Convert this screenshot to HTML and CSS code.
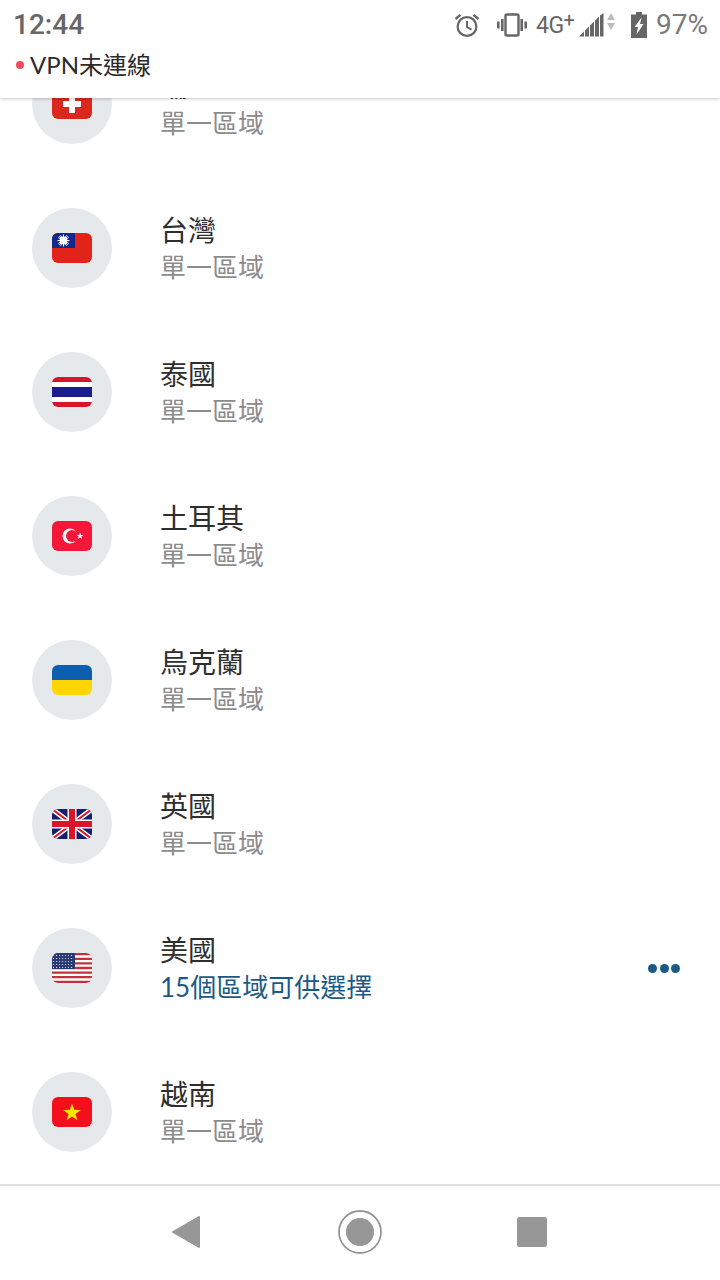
FILE: index.html
```html
<!DOCTYPE html>
<html lang="zh-Hant">
<head>
<meta charset="utf-8">
<title>VPN</title>
<link rel="stylesheet" href="styles.css">
</head>
<body>
<div class="app">
  <header class="top">
    <div class="status">
      <span class="time">12:44</span>
      <div class="sys">
        <svg class="i-alarm" width="26" height="24" viewBox="0 0 26 24"><circle cx="13" cy="13.5" r="9.4" fill="none" stroke="#666" stroke-width="2.2"/><path d="M13 8v6l4.5 2.6" fill="none" stroke="#666" stroke-width="2"/><path d="M1.5 6 6.5 1.8M24.500 6 19.500 1.800" stroke="#666" stroke-width="2.400" fill="none"/></svg>
        <svg class="i-vib" width="32" height="24" viewBox="0 0 32 24"><rect x="9.500" y="1.500" width="13" height="21" rx="1.500" fill="none" stroke="#666" stroke-width="2.400"/><path d="M1 8.500h2.600v7H1zM5 6h2.600v12H5zM24.400 6H27v12h-2.600zM28.400 8.500H31v7h-2.600z" fill="#666"/></svg>
        <span class="net">4G<sup class="plus">+</sup></span>
        <svg class="i-sig" width="25" height="24" viewBox="0 0 25 24"><path d="M0 23.500 5 18.500V23.500ZM6 17.500 10 13.500V23.500H6ZM11 12.500 15 8.500V23.500H11ZM16 7.500 20 3.500V23.500H16ZM21 2.500 24.500 0V23.500H21Z" fill="#666"/></svg>
        <svg class="i-arr" width="8" height="17" viewBox="0 0 8 17"><path d="M4 0 8 7H0Z" fill="#bbb"/><path d="M4 17 0 10H8Z" fill="#bbb"/></svg>
        <svg class="i-bat" width="16" height="26" viewBox="0 0 16 26"><path d="M5 0h6v2.500h5V26H0V2.500h5Z" fill="#666"/><path d="M10.500 5.500 3.500 15h3.500l-1.500 7.500 7-10.500H9Z" fill="#fff"/></svg>
        <span class="pct">97%</span>
      </div>
    </div>
    <div class="vpn"><span class="vpn-dot"></span><span>VPN未連線</span></div>
  </header>

  <main class="list">
    <div class="rows">
      <div class="row">
        <div class="disc"><svg class="flag" viewBox="0 0 40 30"><rect width="40" height="30" fill="#da291c"/><path d="M17 6h6v6h6v6h-6v6h-6v-6h-6v-6h6Z" fill="#fff"/></svg></div>
        <div class="txt"><div class="name">瑞士</div><div class="sub">單一區域</div></div>
      </div>
      <div class="row">
        <div class="disc"><svg class="flag" viewBox="0 0 40 30"><rect width="40" height="30" fill="#e2231a"/><rect width="23" height="15" fill="#13288a"/><g stroke="#fff" stroke-width="1"><path d="M11.500 1.500v12M5.500 7.500h12M7.300 3.300l8.400 8.400M15.700 3.300l-8.400 8.400M8.500 2.300l6 10.400M14.500 2.300l-6 10.400M6.300 4.500l10.400 6M16.700 4.500l-10.400 6"/></g><circle cx="11.500" cy="7.500" r="3.900" fill="#fff"/></svg></div>
        <div class="txt"><div class="name">台灣</div><div class="sub">單一區域</div></div>
      </div>
      <div class="row">
        <div class="disc"><svg class="flag" viewBox="0 0 40 30"><rect width="40" height="30" fill="#fff"/><rect width="40" height="5" fill="#d8152b"/><rect y="25" width="40" height="5" fill="#d8152b"/><rect y="10" width="40" height="10" fill="#1c1c8c"/></svg></div>
        <div class="txt"><div class="name">泰國</div><div class="sub">單一區域</div></div>
      </div>
      <div class="row">
        <div class="disc"><svg class="flag" viewBox="0 0 40 30"><rect width="40" height="30" fill="#f5173a"/><circle cx="18" cy="15" r="7.500" fill="#fff"/><circle cx="20" cy="15" r="6" fill="#f5173a"/><path d="M28 11.600l.9 2.400 2.500.1-2 1.500.7 2.400-2.100-1.400-2.100 1.400.7-2.400-2-1.500 2.500-.1Z" fill="#fff"/></svg></div>
        <div class="txt"><div class="name">土耳其</div><div class="sub">單一區域</div></div>
      </div>
      <div class="row">
        <div class="disc"><svg class="flag" viewBox="0 0 40 30"><rect width="40" height="15" fill="#0d5eaf"/><rect y="15" width="40" height="15" fill="#ffd500"/></svg></div>
        <div class="txt"><div class="name">烏克蘭</div><div class="sub">單一區域</div></div>
      </div>
      <div class="row">
        <div class="disc"><svg class="flag" viewBox="0 0 40 30"><rect width="40" height="30" fill="#14206e"/><path d="M0 0 40 30M40 0 0 30" stroke="#fff" stroke-width="5"/><path d="M0 0 40 30M40 0 0 30" stroke="#d8152b" stroke-width="2"/><path d="M20 0V30M0 15H40" stroke="#fff" stroke-width="9"/><path d="M20 0V30M0 15H40" stroke="#d8152b" stroke-width="6"/></svg></div>
        <div class="txt"><div class="name">英國</div><div class="sub">單一區域</div></div>
      </div>
      <div class="row">
        <div class="disc"><svg class="flag" viewBox="0 0 40 30"><rect width="40" height="30" fill="#fff"/><path d="M0 1.200H40M0 5.800H40M0 10.400H40M0 15H40M0 19.600H40M0 24.200H40M0 28.800H40" stroke="#c4323f" stroke-width="2.300"/><rect width="23" height="16" fill="#2a3a74"/><path d="M1 2.500H22M1 5.500H22M1 8.500H22M1 11.500H22M1 14.500H22" stroke="#c5cbe0" stroke-width="1.100" stroke-dasharray="1.100 1.900"/></svg></div>
        <div class="txt"><div class="name">美國</div><div class="sub sub-multi">15個區域可供選擇</div></div>
        <div class="more"><span></span><span></span><span></span></div>
      </div>
      <div class="row">
        <div class="disc"><svg class="flag" viewBox="0 0 40 30"><rect width="40" height="30" fill="#f40f1c"/><path d="M20 6.500l2.200 6.300 6.600.1-5.300 4 1.900 6.400-5.400-3.800-5.400 3.800 1.900-6.400-5.300-4 6.600-.1Z" fill="#ffe600"/></svg></div>
        <div class="txt"><div class="name">越南</div><div class="sub">單一區域</div></div>
      </div>
    </div>
  </main>

  <nav class="nav">
    <svg class="nav-back" width="28" height="32" viewBox="0 0 28 32"><path d="M27 1V31L1 16Z" fill="#979797" stroke="#979797" stroke-width="2" stroke-linejoin="round"/></svg>
    <svg class="nav-home" width="44" height="44" viewBox="0 0 44 44"><circle cx="22" cy="22" r="21" fill="none" stroke="#979797" stroke-width="1.800"/><circle cx="22" cy="22" r="14" fill="#979797"/></svg>
    <svg width="30" height="30" viewBox="0 0 30 30"><rect width="30" height="30" rx="2.500" fill="#979797"/></svg>
  </nav>
</div>
</body>
</html>
```

FILE: styles.css
```css
* { box-sizing: border-box; }
html, body { margin: 0; padding: 0; }
body {
  background: #fff;
  font-family: "Open Sans", "Noto Sans CJK TC", sans-serif;
}
.app {
  width: 720px;
  height: 1280px;
  display: flex;
  flex-direction: column;
  overflow: hidden;
}
.top {
  position: relative;
  z-index: 2;
  flex: none;
  height: 98px;
  background: #fff;
  box-shadow: 0 1px 3px rgba(0, 0, 0, .22);
}
.status {
  height: 48px;
  display: flex;
  align-items: center;
  justify-content: space-between;
  padding: 2px 12px 0 13px;
}
.time {
  font: 500 28px/1 Roboto, sans-serif;
  color: #666;
}
.sys {
  display: flex;
  align-items: center;
  color: #757575;
}
.i-alarm { margin-right: 16px; }
.i-vib { margin-right: 8px; }
.net {
  font: 400 23px/1 Roboto, sans-serif;
  color: #666;
  width: 43px;
  letter-spacing: -.5px;
}
.plus { font-size: 20px; line-height: 0; vertical-align: 6px; }
.i-sig { margin-right: 3px; }
.i-arr { margin-right: 16px; margin-top: -7px; }
.i-bat { margin-right: 9px; margin-top: -1px; }
.pct {
  font: 400 28px/1 Roboto, sans-serif;
  color: #7a7a7a;
}
.vpn {
  display: flex;
  align-items: center;
  height: 34px;
  padding-left: 16px;
  font: 400 24px/1 Lato, "Noto Sans CJK TC", sans-serif;
  color: #2b2b2b;
}
.vpn-dot {
  width: 8px;
  height: 8px;
  margin-right: 6px;
  border-radius: 50%;
  background: #ef4b5a;
}
.list {
  flex: 1;
  min-height: 0;
  overflow: hidden;
}
.rows { margin-top: -66px; }
.row {
  height: 144px;
  display: flex;
  align-items: center;
  padding: 0 40px 0 32px;
}
.disc {
  flex: none;
  width: 80px;
  height: 80px;
  margin-right: 48px;
  display: flex;
  align-items: center;
  justify-content: center;
  border-radius: 50%;
  background: #e6e9ec;
}
.flag {
  display: block;
  width: 40px;
  height: 30px;
  border-radius: 6px;
}
.name {
  font: 400 28px/38px "Noto Sans CJK TC", sans-serif;
  color: #2e2e2e;
}
.sub {
  font: 400 26px/38px Lato, "Noto Sans CJK TC", sans-serif;
  color: #8c8c8c;
}
.sub-multi { color: #1c5a85; }
.more {
  margin-left: auto;
  display: flex;
  gap: 2.5px;
}
.more span {
  width: 9px;
  height: 9px;
  border-radius: 50%;
  background: #1c5a85;
}
.nav {
  flex: none;
  height: 96px;
  border-top: 2px solid #e0e0e0;
  background: #fff;
  display: flex;
  align-items: center;
  padding: 0 0 3px 172px;
}
.nav-back { margin-right: 138px; }
.nav-home { margin-right: 135px; }
```
